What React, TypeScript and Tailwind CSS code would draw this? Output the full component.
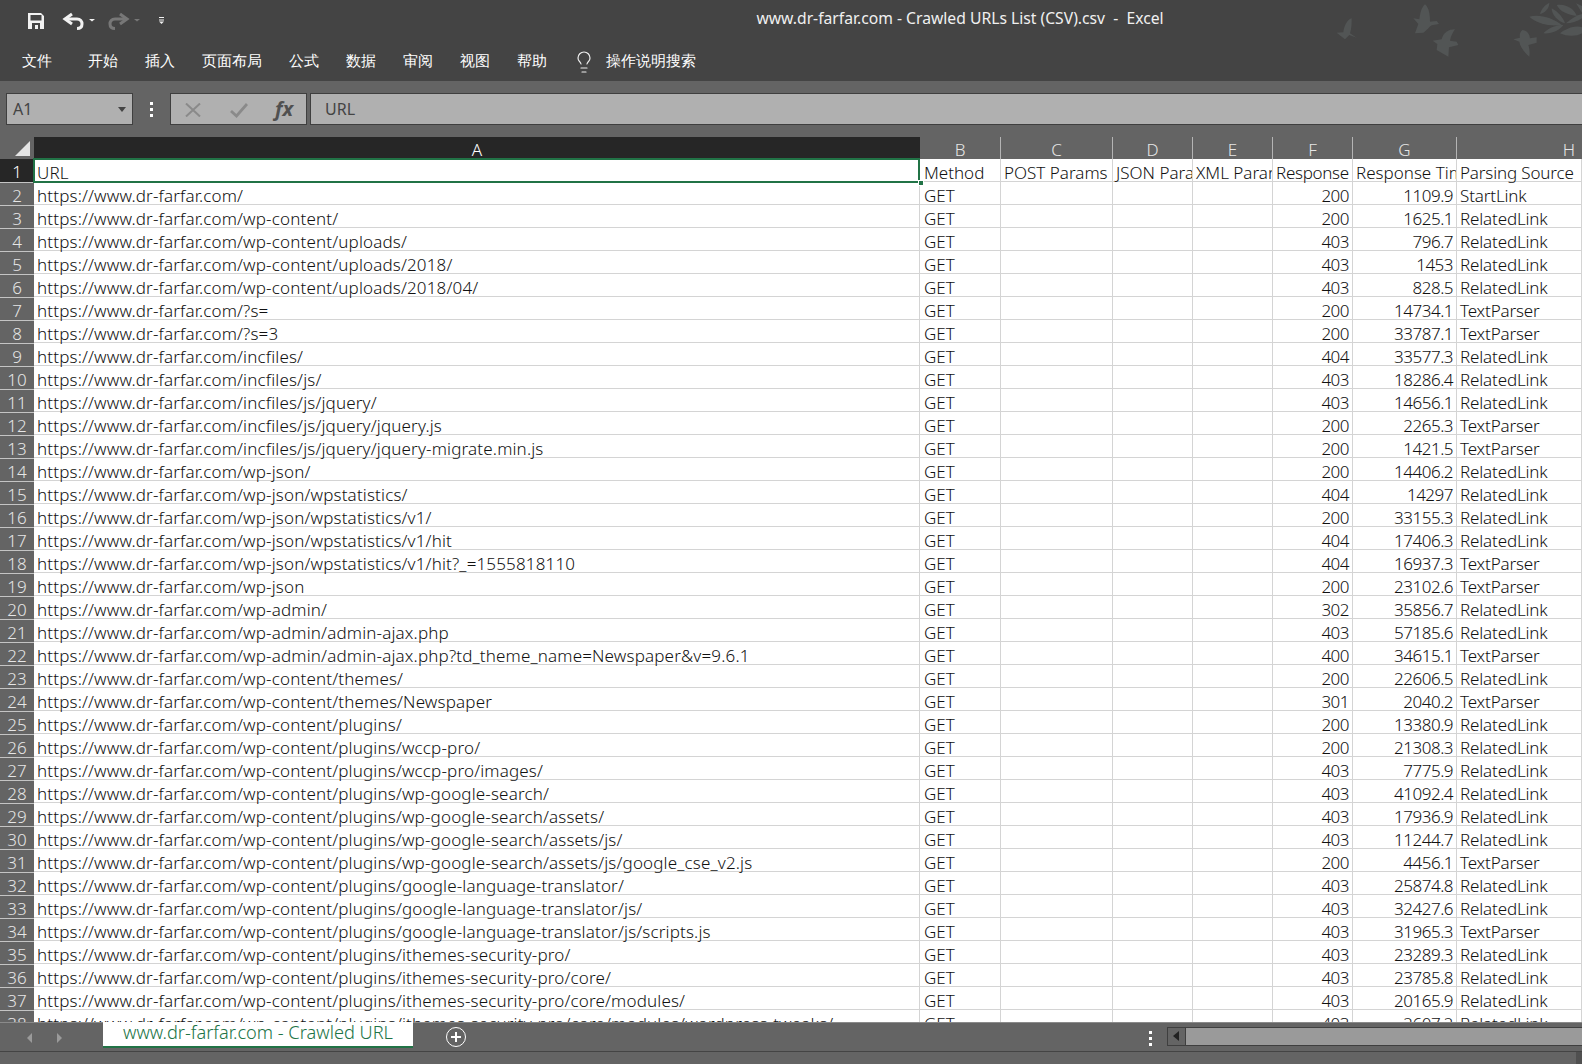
import { Lightbulb } from "lucide-react";

const B = "https://www.dr-farfar.com";

// url, status, time, source
const rows: [string, string, string, string][] = [
  ["/", "200", "1109.9", "StartLink"],
  ["/wp-content/", "200", "1625.1", "RelatedLink"],
  ["/wp-content/uploads/", "403", "796.7", "RelatedLink"],
  ["/wp-content/uploads/2018/", "403", "1453", "RelatedLink"],
  ["/wp-content/uploads/2018/04/", "403", "828.5", "RelatedLink"],
  ["/?s=", "200", "14734.1", "TextParser"],
  ["/?s=3", "200", "33787.1", "TextParser"],
  ["/incfiles/", "404", "33577.3", "RelatedLink"],
  ["/incfiles/js/", "403", "18286.4", "RelatedLink"],
  ["/incfiles/js/jquery/", "403", "14656.1", "RelatedLink"],
  ["/incfiles/js/jquery/jquery.js", "200", "2265.3", "TextParser"],
  ["/incfiles/js/jquery/jquery-migrate.min.js", "200", "1421.5", "TextParser"],
  ["/wp-json/", "200", "14406.2", "RelatedLink"],
  ["/wp-json/wpstatistics/", "404", "14297", "RelatedLink"],
  ["/wp-json/wpstatistics/v1/", "200", "33155.3", "RelatedLink"],
  ["/wp-json/wpstatistics/v1/hit", "404", "17406.3", "RelatedLink"],
  ["/wp-json/wpstatistics/v1/hit?_=1555818110", "404", "16937.3", "TextParser"],
  ["/wp-json", "200", "23102.6", "TextParser"],
  ["/wp-admin/", "302", "35856.7", "RelatedLink"],
  ["/wp-admin/admin-ajax.php", "403", "57185.6", "RelatedLink"],
  ["/wp-admin/admin-ajax.php?td_theme_name=Newspaper&v=9.6.1", "400", "34615.1", "TextParser"],
  ["/wp-content/themes/", "200", "22606.5", "RelatedLink"],
  ["/wp-content/themes/Newspaper", "301", "2040.2", "TextParser"],
  ["/wp-content/plugins/", "200", "13380.9", "RelatedLink"],
  ["/wp-content/plugins/wccp-pro/", "200", "21308.3", "RelatedLink"],
  ["/wp-content/plugins/wccp-pro/images/", "403", "7775.9", "RelatedLink"],
  ["/wp-content/plugins/wp-google-search/", "403", "41092.4", "RelatedLink"],
  ["/wp-content/plugins/wp-google-search/assets/", "403", "17936.9", "RelatedLink"],
  ["/wp-content/plugins/wp-google-search/assets/js/", "403", "11244.7", "RelatedLink"],
  ["/wp-content/plugins/wp-google-search/assets/js/google_cse_v2.js", "200", "4456.1", "TextParser"],
  ["/wp-content/plugins/google-language-translator/", "403", "25874.8", "RelatedLink"],
  ["/wp-content/plugins/google-language-translator/js/", "403", "32427.6", "RelatedLink"],
  ["/wp-content/plugins/google-language-translator/js/scripts.js", "403", "31965.3", "TextParser"],
  ["/wp-content/plugins/ithemes-security-pro/", "403", "23289.3", "RelatedLink"],
  ["/wp-content/plugins/ithemes-security-pro/core/", "403", "23785.8", "RelatedLink"],
  ["/wp-content/plugins/ithemes-security-pro/core/modules/", "403", "20165.9", "RelatedLink"],
  ["/wp-content/plugins/ithemes-security-pro/core/modules/wordpress-tweaks/", "403", "2607.2", "RelatedLink"],
];

const cols = "grid grid-cols-[34px_886px_81px_112px_80px_80px_80px_104px_1fr]";
const cell = "h-[23px] border-r border-b border-[#d4d4d4] px-[3px] leading-[28px] overflow-x-clip whitespace-nowrap";
const hdr = "h-[22px] border-r border-[#b4b4b4] text-center leading-[25px] text-[#e6e6e6] overflow-x-clip";

const menu = [
  ["文件", "left-[22px]"],
  ["开始", "left-[88px]"],
  ["插入", "left-[145px]"],
  ["页面布局", "left-[202px]"],
  ["公式", "left-[289px]"],
  ["数据", "left-[346px]"],
  ["审阅", "left-[403px]"],
  ["视图", "left-[460px]"],
  ["帮助", "left-[517px]"],
];

function Birds() {
  return (
    <svg className="absolute left-[1300px] top-0" width="282" height="80" viewBox="0 0 846 240" fill="#525555">
      <path d="M155 55C140 60 132 80 130 97L110 98L135 118L148 105L170 113L150 100C155 85 155 70 155 55Z" />
      <path d="M375 13C362 25 360 45 358 58L340 55L355 72L345 100L370 98C382 90 388 80 395 76L417 72L410 63L390 65C390 45 388 25 375 13Z" />
      <path d="M465 88C445 88 430 98 425 118L398 122L412 132L410 150L445 170L447 142L475 135L470 125L450 122C452 110 458 98 465 88Z" />
      <path d="M668 90C660 95 658 105 660 113L640 118L658 125C660 140 675 160 688 170C690 155 688 145 685 135L710 128L710 112L690 115C688 100 680 92 668 90Z" />
      <path d="M688 50C720 42 760 55 785 75C750 80 710 70 688 50Z" />
      <path d="M755 25C775 35 790 55 795 70C775 65 755 45 755 25Z" />
      <path d="M770 15C800 10 825 30 830 48C805 45 780 35 770 15Z" />
      <path d="M730 100C750 80 770 75 790 75C780 90 755 102 730 100Z" />
      <path d="M780 100C800 85 825 75 846 82V100C830 110 800 110 780 100Z" />
      <path d="M720 42C725 25 735 15 748 8C748 25 735 38 720 42Z" />
      <path d="M798 70C815 55 830 45 846 42V55C830 65 815 70 798 70Z" />
      <path d="M828 10L846 38V18Z" />
    </svg>
  );
}

function QuickAccess() {
  return (
    <svg className="absolute left-0 top-0" width="200" height="40" viewBox="0 0 200 40">
      <path fillRule="evenodd" fill="#f2f2f2" d="M28 13H41L44 16V29H28ZM30.500 15V20.500H41.500V15ZM32 23V29H40V23ZM35 25H38V29H35Z" />
      <path d="M67 19H77C80.500 19 82 21.500 82 24C82 26.500 80.500 28.500 77 28.500" fill="none" stroke="#f2f2f2" strokeWidth="3" />
      <path d="M72 14L65 19L72 24" fill="none" stroke="#f2f2f2" strokeWidth="3" />
      <path d="M89 19H95L92 21.500Z" fill="#f2f2f2" />
      <path d="M125 19H115C111.500 19 110 21.500 110 24C110 26.500 111.500 28.500 115 28.500" fill="none" stroke="#777777" strokeWidth="3" />
      <path d="M120 14L127 19L120 24" fill="none" stroke="#777777" strokeWidth="3" />
      <path d="M134 19H140L137 21.500Z" fill="#777777" />
      <path d="M159 17.500H164M159 20H164" stroke="#f2f2f2" strokeWidth="1" />
      <path d="M159 21.500H164L161.500 24Z" fill="#f2f2f2" />
    </svg>
  );
}

export default function App() {
  return (
    <div className="relative w-[1582px] h-[1064px] overflow-hidden bg-[#646464] font-['Roboto','Noto_Sans_CJK_SC',sans-serif] font-light text-[17px]">
      {/* Title bar + ribbon tabs */}
      <div className="absolute inset-x-0 top-0 h-[81px] bg-[#444444] text-white">
        <Birds />
        <QuickAccess />
        <div className="absolute left-[756px] top-[7px] w-[408px] text-center text-[15.700px] leading-[22px] font-normal whitespace-nowrap text-[#f0f0f0]">
          www.dr-farfar.com - Crawled URLs List (CSV).csv&nbsp; -&nbsp; Excel
        </div>
        {menu.map(([t, pos]) => (
          <span key={t} className={`absolute top-[49px] text-[15px] leading-[22px] font-normal font-['Noto_Sans_CJK_SC',sans-serif] ${pos}`}>
            {t}
          </span>
        ))}
        <Lightbulb size={24} strokeWidth={1.200} className="absolute left-[572px] top-[50px] text-[#eeeeee]" />
        <span className="absolute left-[606px] top-[49px] text-[15px] leading-[22px] font-normal font-['Noto_Sans_CJK_SC',sans-serif]">
          操作说明搜索
        </span>
      </div>

      {/* Formula bar */}
      <div className="absolute left-[6px] top-[93px] w-[127px] h-[32px] bg-[#b0b0b0] border border-[#3f3f3f] pl-[6px] leading-[30px] text-[16px] text-[#444444] font-normal">
        A1
        <span className="absolute left-[111px] top-[13px] w-0 h-0 border-x-[4px] border-x-transparent border-t-[5px] border-t-[#444444]" />
      </div>
      <div className="absolute left-[150px] top-[102px] flex flex-col gap-[3px]">
        <span className="w-[3px] h-[3px] bg-white" />
        <span className="w-[3px] h-[3px] bg-white" />
        <span className="w-[3px] h-[3px] bg-white" />
      </div>
      <div className="absolute left-[170px] top-[93px] w-[137px] h-[32px] bg-[#b0b0b0] border border-[#3f3f3f]">
        <svg className="absolute left-[14px] top-[9px]" width="16" height="14" viewBox="0 0 16 14" fill="none" stroke="#8a8a8a" strokeWidth="2">
          <path d="M1 0.500L15 13.500M15 0.500L1 13.500" />
        </svg>
        <svg className="absolute left-[59px] top-[9px]" width="18" height="15" viewBox="0 0 18 15" fill="none" stroke="#8a8a8a" strokeWidth="2.800">
          <path d="M1 8L6.500 13L17 1" />
        </svg>
        <span className="absolute left-[104px] top-[0px] font-['Liberation_Serif',serif] italic font-bold text-[20px] leading-[29px] text-[#505050]">
          fx
        </span>
      </div>
      <div className="absolute left-[310px] right-0 top-[93px] h-[32px] bg-[#b0b0b0] border-y border-l border-[#3f3f3f] pl-[14px] leading-[30px] text-[16px] text-[#444444] font-normal">
        URL
      </div>

      {/* Sheet */}
      <div className="absolute inset-x-0 top-[137px] h-[885px] overflow-hidden bg-white text-[#111111]">
        <div className={`${cols} bg-[#646464]`}>
          <div className="relative h-[22px] border-r border-[#646464]">
            <span className="absolute left-[15px] top-[4px] w-0 h-0 border-l-[15px] border-l-transparent border-b-[15px] border-b-[#e4e4e4]" />
          </div>
          <div className="h-[22px] bg-[#262626] text-center leading-[25px] text-white">A</div>
          {["B", "C", "D", "E", "F", "G"].map((c) => (
            <div key={c} className={hdr}>{c}</div>
          ))}
          <div className="h-[22px] pr-[7px] text-right leading-[25px] text-[#e6e6e6]">H</div>
        </div>

        <div className={cols}>
          <div className="h-[23px] bg-[#262626] text-center leading-[26px] text-white">1</div>
          <div className={`${cell} tracking-[0.16px]`}>URL</div>
          <div className={`${cell} pl-[4px]`}>Method</div>
          <div className={cell}>POST Params</div>
          <div className={cell}>JSON Params</div>
          <div className={cell}>XML Params</div>
          <div className={`${cell} tracking-[-0.3px]`}>Response Code</div>
          <div className={cell}>Response Time</div>
          <div className={`${cell} tracking-[-0.15px]`}>Parsing Source</div>
        </div>

        {rows.map(([url, status, time, source], i) => (
          <div key={url} className={cols}>
            <div className="h-[23px] bg-[#646464] border-t border-[#c4c4c4] text-center leading-[25px] text-[#e6e6e6]">{i + 2}</div>
            <div className={`${cell} tracking-[0.16px]`}>{B + url}</div>
            <div className={`${cell} pl-[4px]`}>GET</div>
            <div className={cell} />
            <div className={cell} />
            <div className={cell} />
            <div className={`${cell} text-right tracking-[-0.5px]`}>{status}</div>
            <div className={`${cell} text-right tracking-[-0.5px]`}>{time}</div>
            <div className={`${cell} tracking-[-0.15px]`}>{source}</div>
          </div>
        ))}

        {/* A1 selection */}
        <div className="absolute left-[33px] top-[21px] w-[887px] h-[25px] border-2 border-[#217346]" />
        <div className="absolute left-[918px] top-[43px] w-[6px] h-[6px] bg-[#217346] border border-white" />
      </div>

      {/* Sheet tabs + scrollbar */}
      <div className="absolute inset-x-0 top-[1022px] h-[29px] bg-[#646464] border-t border-[#8a8a8a]">
        <span className="absolute left-[27px] top-[10px] w-0 h-0 border-y-[5px] border-y-transparent border-r-[5px] border-r-[#9a9a9a]" />
        <span className="absolute left-[57px] top-[10px] w-0 h-0 border-y-[5px] border-y-transparent border-l-[5px] border-l-[#9a9a9a]" />
        <div className="absolute left-[103px] top-[-1px] w-[310px] h-[26px] bg-white border-b-2 border-[#217346] text-center text-[18.200px] leading-[20px] text-[#217346]">
          www.dr-farfar.com - Crawled URL
        </div>
        <div className="absolute left-[446px] top-[4px] w-[20px] h-[20px] rounded-full border-[1.500px] border-white flex items-center justify-center text-white">
          <svg width="12" height="12" viewBox="0 0 12 12" stroke="white" strokeWidth="2"><path d="M6 1V11M1 6H11" /></svg>
        </div>
        <div className="absolute left-[1149px] top-[8px] flex flex-col gap-[3px]">
          <span className="w-[3px] h-[3px] bg-white" />
          <span className="w-[3px] h-[3px] bg-white" />
          <span className="w-[3px] h-[3px] bg-white" />
        </div>
        <div className="absolute left-[1167px] top-[4px] w-[19px] h-[19px] bg-[#646464] border border-[#3f3f3f]">
          <span className="absolute left-[5px] top-[3px] w-0 h-0 border-y-[5px] border-y-transparent border-r-[6px] border-r-[#222222]" />
        </div>
        <div className="absolute left-[1186px] right-0 top-[4px] h-[19px] bg-[#9a9a9a] border-y border-[#3f3f3f]" />
      </div>
      <div className="absolute inset-x-0 top-[1051px] h-[13px] bg-[#646464] border-t border-[#444444]" />
      <div className="absolute left-[1576px] top-[1052px] w-[6px] h-[12px] bg-[#505050]" />
    </div>
  );
}
